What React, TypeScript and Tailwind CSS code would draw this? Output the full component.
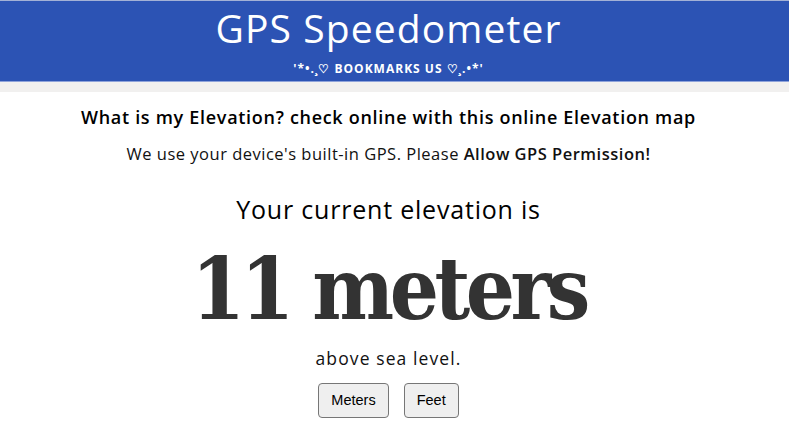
export default function App() {
  const poppins = { fontFamily: '"Open Sans", "Noto Sans", sans-serif' }
  return (
    <div className="min-h-[442px] bg-white text-black" style={poppins}>
      {/* Header */}
      <header className="bg-[#2c53b4] border-t border-t-[#a3b1d6] border-b border-b-[#8fa3da] h-[82px] flex flex-col items-center pr-[12px]">
        <h1 className="text-white text-[39px] leading-none mt-[7px] tracking-[1.1px]">GPS Speedometer</h1>
        <div className="text-white text-[12px] font-bold mt-[16px] tracking-[1px] leading-none">
          '*•.¸♡ BOOKMARKS US ♡¸.•*'
        </div>
      </header>
      <div className="h-[10px] bg-[#f1f0ef]" />

      {/* Content */}
      <main className="flex flex-col items-center text-center pr-[12px]">
        <h2 className="text-[18px] font-semibold mt-[12px] leading-[26px] tracking-[0.7px]">
          What is my Elevation? check online with this online Elevation map
        </h2>
        <p className="text-[16.5px] mt-[12px] leading-[24px] text-[#111] tracking-[0.5px]">
          We use your device's built-in GPS. Please <b className="font-semibold">Allow GPS Permission!</b>
        </p>
        <h3 className="text-[25px] mt-[27px] leading-[32px] tracking-[0.8px]">Your current elevation is</h3>
        <div
          className="text-[86px] font-bold text-[#333] leading-none mt-[21px] font-stretch-condensed tracking-[-4.5px]"
          style={{ fontFamily: '"DejaVu Serif", "Liberation Serif", serif' }}
        >
          11 meters
        </div>
        <p className="text-[17.5px] mt-[14px] leading-[24px] text-[#111] tracking-[1.1px]">above sea level.</p>
        <div className="flex gap-[15px] mt-[13px]" style={{ fontFamily: '"Liberation Sans", Arial, sans-serif' }}>
          <button className="h-[35px] px-[12px] text-[14.5px] bg-[#efefef] border border-[#767676] rounded-[4px]">Meters</button>
          <button className="h-[35px] px-[12px] text-[14.5px] bg-[#efefef] border border-[#767676] rounded-[4px]">Feet</button>
        </div>
      </main>
    </div>
  )
}
